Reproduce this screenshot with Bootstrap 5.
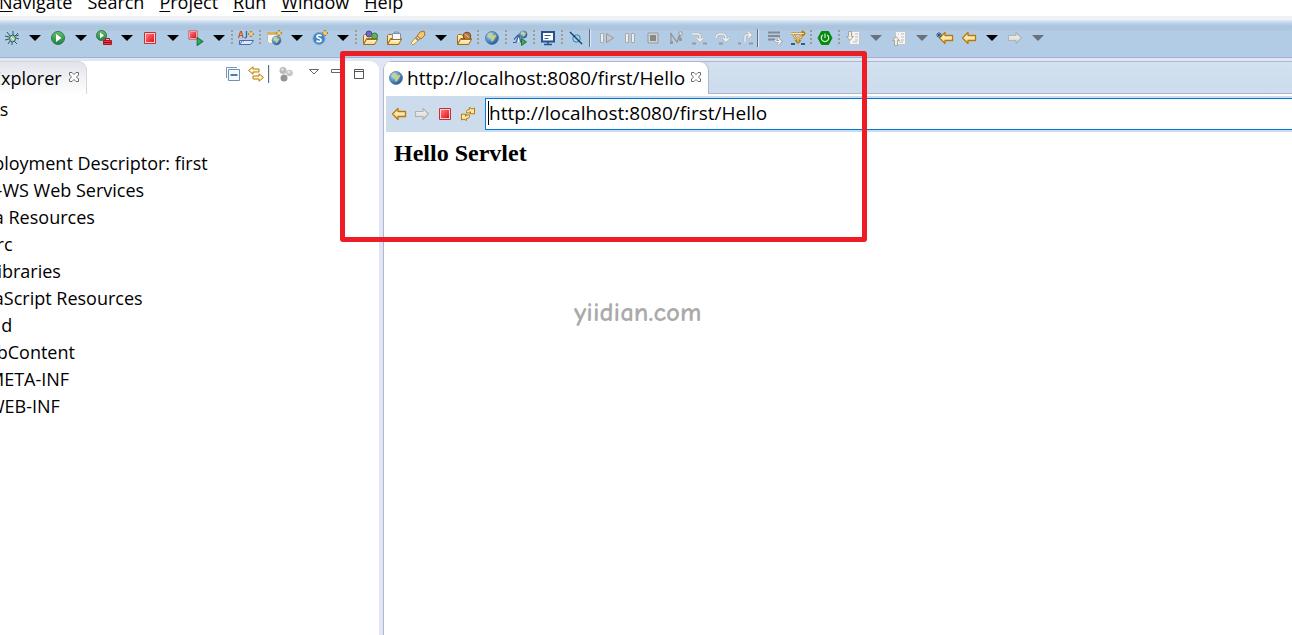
<!DOCTYPE html>
<html lang="en">
<head>
<meta charset="utf-8">
<meta name="viewport" content="width=device-width, initial-scale=1">
<title>Workbench</title>
<link rel="stylesheet" href="https://cdn.jsdelivr.net/npm/bootstrap@5.3.0/dist/css/bootstrap.min.css">
<style>
  body { font-family: "Open Sans", "Noto Sans", sans-serif; font-size: 18px; line-height: 24px; color: #000; background: #fff; }
  button { border: 0; background: none; padding: 0; color: inherit; }
  .menubar { height: 16px; padding-bottom: 2px; margin-left: -1px; gap: 15px; }
  .menubar a { color: #000; text-decoration: none; }
  .menubar u { text-underline-offset: 2px; }
  .toolstrip { height: 42px; padding-top: 3px; border-bottom: 1px solid #a3b0cb;
    background: linear-gradient(#f0f0f0 0 2px, #f1f7fc 3px, #d5e4f2 5px, #bfd5ea 7px, #abc5df 10px, #adc6e0 14px, #b2cce6 15px); }
  .tool { width: 24px; height: 24px; }
  .step { width: 23px; }
  .drop { width: 22px; height: 24px; }
  .drop::after { content: ""; border: 6px solid transparent; border-top-color: #000; border-bottom: 0; }
  .drop:disabled::after { border-top-color: #6d7076; }
  .dots { width: 4px; height: 16px; background: radial-gradient(circle at 2px 1px, #a89a86 1px, transparent 1px) 0 0 / 4px 4px; }
  .bar { width: 4px; height: 18px; margin-right: 3px; background: linear-gradient(90deg, transparent 1px, #5f6e80 1px 2px, #dfe9f3 2px 3px, transparent 3px); }
  .ico { width: 16px; height: 16px; fill: none; flex: none; overflow: visible; }
  .frame { background: #e1e6f5; padding-top: 3px; }
  .explorer { width: 379px; background: #fff; border-top-right-radius: 9px; overflow: hidden; margin-right: 4px; }
  .viewtab { height: 33px; padding-right: 4px; gap: 4px; border: 1px solid #d3d6de; border-width: 1px 1px 0 0;
    border-top-right-radius: 9px; background: linear-gradient(#e2e4ea, #fff); }
  .viewtab > span { margin-left: -9px; }
  .viewtools { padding-right: 9px; height: 26px; }
  .winbtn { width: 21px; }
  .tree { margin: 2px 0 0 -54px; line-height: 27px; white-space: nowrap; }
  .tree li { min-height: 27px; }
  .tree ul { padding-left: 24px; }
  .tree ul ul { padding-left: 18px; }
  .editor { min-width: 0; border-left: 1px solid #b0b6ce; border-top-left-radius: 9px; background: #fff; overflow: hidden; }
  .tabs { height: 33px; border-top: 1px solid #b0b6ce; background: #cfdeee; }
  .pagetab { padding: 0 4px 0 4px; gap: 3px; white-space: nowrap; font-size: 19px; background: #fff; border-right: 1px solid #b0b6ce; border-top-right-radius: 9px; }
  .tabspace { background: linear-gradient(#d3e1f0, #cbdcec); border-bottom: 1px solid #b0b6ce; }
  .browserbar { margin: 2px 0 0 2px; height: 36px; padding: 2px 0 2px 1px; background: #ccdcec; }
  .url { height: 32px; margin-left: 6px; padding: 0 0 3px 3px; border: 1px solid #0078d7; border-right: 0; background: #fff; min-width: 0; outline: 0; color: #000; font-size: 19px; }
  .caret { top: 3px; left: 9px; width: 1px; height: 24px; background: #000; }
  .page { padding: 7px 10px; font-family: "Liberation Serif", serif; }
  .page h1 { font-size: 24px; line-height: 28px; font-weight: 700; margin: 0; }
  .callout { left: 340px; top: 51px; width: 527px; height: 191px; border: 5px solid #ee1c25; border-radius: 3px; pointer-events: none; }
  .stamp { left: 574px; top: 298px; font: 700 27px/30px "Comic Sans MS", "Comic Neue", Lato, sans-serif; color: #aaa; }
</style>
</head>
<body class="position-relative min-vh-100 overflow-hidden d-flex flex-column">

<svg width="0" height="0" class="position-absolute" aria-hidden="true">
  <defs>
    <radialGradient id="gGlobe" cx=".35" cy=".3" r=".8"><stop offset="0" stop-color="#d8f0fb"/><stop offset=".45" stop-color="#5b9bcf"/><stop offset="1" stop-color="#1e4684"/></radialGradient>
    <linearGradient id="gRun" x2="0" y2="1"><stop offset="0" stop-color="#6cc067"/><stop offset="1" stop-color="#1f7f48"/></linearGradient>
    <linearGradient id="gRed" x2="1" y2="1"><stop offset="0" stop-color="#ff7b7b"/><stop offset="1" stop-color="#e00f1c"/></linearGradient>
    <linearGradient id="gGold" x2="0" y2="1"><stop offset="0" stop-color="#fffbe2"/><stop offset="1" stop-color="#fbd673"/></linearGradient>
    <linearGradient id="gGrey" x2="0" y2="1"><stop offset="0" stop-color="#fafafa"/><stop offset="1" stop-color="#cfcfcf"/></linearGradient>
    <symbol id="globe" viewBox="0 0 16 16"><circle cx="8" cy="8" r="6.500" fill="url(#gGlobe)" stroke="#5d7896" stroke-width=".8"/><path d="M4 5 6 3l2 .5L7.500 5 9 6l2-1.500 1.500 1L11 8l-2 3-1.500 1L7 9 5 7Z" fill="#c9d08a"/><path d="M10 3.500 12 4l.5 1.500-2-.5Z" fill="#6ea35a"/></symbol>
    <symbol id="stop" viewBox="0 0 16 16"><path d="M2.500 2.500h11v11h-11Z" fill="#ffd2d2" stroke="#c3303b"/><path d="M4 4h8v8H4Z" fill="url(#gRed)"/></symbol>
    <symbol id="left" viewBox="0 0 16 16"><path d="M1.500 8 7 2.500v3h7.500v5H7v3Z" fill="url(#gGold)" stroke="#b8780f" stroke-width="1.300" stroke-linejoin="round"/></symbol>
    <symbol id="right" viewBox="0 0 16 16"><path d="M14.500 8 9 2.500v3H1.500v5H9v3Z" fill="url(#gGrey)" stroke="#b2b2b2" stroke-width="1.100" stroke-linejoin="round"/></symbol>
    <symbol id="folder" viewBox="0 0 16 16"><path d="M1.500 13.500v-8l1-1h3l1 1H12v3" fill="#ffe9ad" stroke="#a56b17"/><path d="m1.500 14.500 3-6h11l-3 6Z" fill="url(#gGold)" stroke="#a56b17" stroke-linejoin="round"/></symbol>
    <symbol id="folderfront" viewBox="0 0 16 16"><path d="m1.500 14.500 3-5h11l-3 5Z" fill="url(#gGold)" stroke="#a56b17" stroke-linejoin="round"/></symbol>
    <symbol id="spark" viewBox="0 0 6 6"><path d="M3 0v6M0 3h6" stroke="#b17a12" stroke-width="2.200"/><path d="M3 .8v4.400M.8 3h4.400" stroke="#fff3b0" stroke-width="1"/></symbol>
    <symbol id="close" viewBox="0 0 12 12"><path d="M1.500 1.500H4L6 3.500l2-2h2.500V4l-2 2 2 2v2.500H8l-2-2-2 2H1.500V8l2-2-2-2Z" fill="#fff" stroke="#6c6c6c"/></symbol>
    <symbol id="play" viewBox="0 0 6 8"><path d="M.5.5 5.500 4l-5 3.500Z" fill="#3bab4f" stroke="#1c7a3f"/></symbol>
    <symbol id="sheet" viewBox="0 0 16 16"><path d="M4.500 1.500h10v13h-10Z" fill="#f4f4f2" stroke="#c3c5c8"/><path d="M10 4h3M10 7h3M10 10h3M8 12h4M7 4h1" stroke="#bbb"/></symbol>
  </defs>
</svg>

<nav class="menubar d-flex align-items-end flex-shrink-0" aria-label="Menu">
  <a href="#"><u>N</u>avigate</a><a href="#">Search</a><a href="#"><u>P</u>roject</a><a href="#"><u>R</u>un</a><a href="#"><u>W</u>indow</a><a href="#"><u>H</u>elp</a>
</nav>

<div class="toolstrip d-flex align-items-center flex-shrink-0" role="toolbar" aria-label="Main toolbar">
  <button class="tool d-flex align-items-center justify-content-center" aria-label="Debug"><svg class="ico"><g stroke="#2c5b66"><path d="m6 6-3-4M9 5V1m2 5 3-3M5 7 1 6m4 3-4 1m5 1-2 3m4-2v3m2-4 3 3m-1-6 3 1m-3-3 3-1"/><ellipse cx="8.500" cy="8.500" rx="3" ry="3.400" fill="#a8d29b"/></g><path d="m7 7 3 3" stroke="#eefbe0"/></svg></button>
  <button class="drop d-flex align-items-center justify-content-center" aria-label="Debug options"></button>
  <button class="tool d-flex align-items-center justify-content-center" aria-label="Run"><svg class="ico"><circle cx="8" cy="8" r="6.500" fill="url(#gRun)" stroke="#2b7c49"/><path d="M6 4v8l5.500-4Z" fill="#fff"/></svg></button>
  <button class="drop d-flex align-items-center justify-content-center" aria-label="Run options"></button>
  <button class="tool d-flex align-items-center justify-content-center" aria-label="External tools"><svg class="ico"><circle cx="5.500" cy="5.500" r="5" fill="url(#gRun)" stroke="#2b7c49"/><path d="M4 2.500v6l4-3Z" fill="#fff"/><path d="M9.500 10V8.500h4V10" stroke="#b3121c"/><path d="M7.500 10.500h8v4h-8Z" fill="#f0323b" stroke="#b3121c"/><path d="M8 12.500h7" stroke="#8b0c14"/></svg></button>
  <button class="drop d-flex align-items-center justify-content-center" aria-label="External tool options"></button>
  <button class="tool d-flex align-items-center justify-content-center" aria-label="Stop"><svg class="ico"><use href="#stop"/></svg></button>
  <button class="drop d-flex align-items-center justify-content-center" aria-label="Stop options"></button>
  <button class="tool d-flex align-items-center justify-content-center" aria-label="Relaunch"><svg class="ico"><use href="#stop" x="-1" y="-1" width="12" height="12"/><use href="#play" x="8" y="7" width="8" height="9"/></svg></button>
  <button class="drop d-flex align-items-center justify-content-center" aria-label="Relaunch options"></button>
  <span class="dots"></span>
  <button class="tool d-flex align-items-center justify-content-center" aria-label="New aspect"><svg class="ico"><path d="M.5 8 2.500 1.500H3.500L5 8M1.500 5.500h3" stroke="#c9541c" stroke-width="1.200"/><path d="M8.500 1v5.500Q8.500 8 6.500 8" stroke="#2f62ad" stroke-width="1.300"/><use href="#spark" x="10" y="1" width="6" height="6"/><path d="M1.500 14.500v-4h3l1 1m-4 3 3-4h11l-3 4Z" fill="#dce8fa" stroke="#4b6bb0"/></svg></button>
  <span class="dots"></span>
  <button class="tool d-flex align-items-center justify-content-center" aria-label="New web project"><svg class="ico"><path d="M1.500 4.500h10v9h-8l-2-2Z" fill="#f8f6ea" stroke="#b6bdb5"/><path d="M1 3h9" stroke="#e0b04c" stroke-width="2"/><use href="#globe" x="5" y="5" width="11" height="11"/><use href="#spark" x="10" y="0" width="6" height="6"/></svg></button>
  <button class="drop d-flex align-items-center justify-content-center" aria-label="Web project options"></button>
  <button class="tool d-flex align-items-center justify-content-center" aria-label="New servlet"><svg class="ico"><circle cx="7" cy="8.500" r="6" fill="#4384c3" stroke="#77a5d0"/><path d="M9.500 6C8 4.500 4.800 5 5 6.800 5.200 8.500 9.200 8.100 9.200 10.100 9.200 12.100 6 12.100 4.500 10.700" stroke="#fff" stroke-width="1.700"/><use href="#spark" x="10" y="0" width="6" height="6"/></svg></button>
  <button class="drop d-flex align-items-center justify-content-center" aria-label="Servlet options"></button>
  <span class="dots"></span>
  <button class="tool d-flex align-items-center justify-content-center" aria-label="Open type"><svg class="ico"><use href="#folder"/><circle cx="7" cy="4" r="3" fill="#7468b9" stroke="#4c3f97"/><circle cx="12.500" cy="6" r="3" fill="#62b25e" stroke="#2d7c43"/><use href="#folderfront"/></svg></button>
  <button class="tool d-flex align-items-center justify-content-center" aria-label="Open task"><svg class="ico"><use href="#folder"/><path d="M6.500 3.500h8v7h-8Z" fill="#f5f9ff" stroke="#8290a5"/><path d="M8.500 3V2h4v1" stroke="#8290a5"/><use href="#folderfront"/></svg></button>
  <button class="tool d-flex align-items-center justify-content-center" aria-label="Search"><svg class="ico"><path d="m1 13 6-7 3 3-7 6Z" fill="#fff4be" stroke="#c9932c"/><path d="m7 6 3-4 4-1 1 4-4 4Z" fill="#f7c777" stroke="#b56d1d"/><path d="m5.500 7.500 3 3" stroke="#7f8fae" stroke-width="2"/></svg></button>
  <button class="drop d-flex align-items-center justify-content-center" aria-label="Search options"></button>
  <button class="tool d-flex align-items-center justify-content-center" aria-label="Open resource"><svg class="ico"><use href="#folder"/><circle cx="11" cy="6" r="3.800" fill="#b87c46" stroke="#77451c"/><path d="m8.500 4 5 4" stroke="#e8bd88"/><use href="#folderfront"/></svg></button>
  <span class="dots"></span>
  <button class="tool d-flex align-items-center justify-content-center" aria-label="Web browser"><svg class="ico"><use href="#globe"/></svg></button>
  <span class="dots"></span>
  <button class="tool d-flex align-items-center justify-content-center" aria-label="Web services"><svg class="ico"><use href="#globe" x="7" y="0" width="9" height="9"/><path d="M1 12.500h3l3-8 2 8M2 9.500 6 5" stroke="#3e639f" stroke-width="1.200"/><path d="M6.500 8v4" stroke="#fff"/><use href="#play" x="8" y="8" width="8" height="8"/></svg></button>
  <span class="dots"></span>
  <button class="tool d-flex align-items-center justify-content-center" aria-label="Console"><svg class="ico"><path d="M2 2h12v9.500H2Z" fill="#fff" stroke="#294f8c" stroke-width="2"/><path d="M4.500 5.500h6m-6 3h4" stroke="#3d5f95"/><path d="M8 12v2M4 14.500h8" stroke="#294f8c" stroke-width="1.500"/></svg></button>
  <span class="dots"></span>
  <button class="tool d-flex align-items-center justify-content-center" aria-label="Skip breakpoints"><svg class="ico"><circle cx="8.500" cy="8.500" r="3.700" fill="#a5d3e3" stroke="#3d7f9c"/><path d="m2 2 12 12" stroke="#1d3f75" stroke-width="1.400"/></svg></button>
  <span class="bar"></span>
  <button class="tool step d-flex align-items-center justify-content-center" disabled aria-label="Resume"><svg class="ico"><path d="M1.500 3.500h3v9h-3Z" fill="#eee" stroke="#aaa"/><path d="M7.500 3.500v9L14.500 8Z" fill="#c6c6c6" stroke="#999"/></svg></button>
  <button class="tool step d-flex align-items-center justify-content-center" disabled aria-label="Suspend"><svg class="ico"><path d="M3.500 3.500h3v9h-3Zm6 0h3v9h-3Z" fill="#eee" stroke="#a8a8a8"/></svg></button>
  <button class="tool step d-flex align-items-center justify-content-center" disabled aria-label="Terminate"><svg class="ico"><path d="M3 3h10v10H3Z" fill="#d2d2d2" stroke="#999"/><path d="M5 5h6v6H5Z" fill="#888"/></svg></button>
  <button class="tool step d-flex align-items-center justify-content-center" disabled aria-label="Disconnect"><svg class="ico"><path d="M3 12V4l6 8 3-8M12 5v5" stroke="#929292" stroke-width="1.200"/><path d="M2 11h3v3H2Zm0-8h2v2H2Zm9 5h3v3h-3Z" fill="#999"/><circle cx="12.500" cy="3.500" r="1.800" fill="#ddd" stroke="#999"/></svg></button>
  <button class="tool step d-flex align-items-center justify-content-center" disabled aria-label="Step into"><svg class="ico"><path d="M1 4h6q2 0 2 2v5M6 8l3 3 3-3" stroke="#aaa" stroke-width="2.600"/><path d="M1 4h6q2 0 2 2v5M6 8l3 3 3-3" stroke="#f1f1f1" stroke-width="1.500"/><path d="M1 13.500h4m7 0h4" stroke="#999" stroke-width="2"/></svg></button>
  <button class="tool step d-flex align-items-center justify-content-center" disabled aria-label="Step over"><svg class="ico"><path d="M2 8q0-4 5-4t5 4v2M9 8l3 3 3-3" stroke="#aaa" stroke-width="2.600"/><path d="M2 8q0-4 5-4t5 4v2M9 8l3 3 3-3" stroke="#f1f1f1" stroke-width="1.500"/><path d="M5 13.500h4" stroke="#999" stroke-width="2"/></svg></button>
  <button class="tool step d-flex align-items-center justify-content-center" disabled aria-label="Step return"><svg class="ico"><path d="M8 12V7q0-2 2-2h4M11 2l3 3-3 3" stroke="#aaa" stroke-width="2.600"/><path d="M8 12V7q0-2 2-2h4M11 2l3 3-3 3" stroke="#f1f1f1" stroke-width="1.500"/><path d="M1 13.500h3m8 0h4" stroke="#999" stroke-width="2"/></svg></button>
  <span class="bar"></span>
  <button class="tool step d-flex align-items-center justify-content-center" aria-label="Drop to frame"><svg class="ico"><path d="M1 2.500h12M1 6h12M1 9.500h7" stroke="#858b92" stroke-width="1.800"/><path d="M8 10q0 2 5 1.500M11 8.500l3 3-3 3" stroke="#999" stroke-width="2.600"/><path d="M8 10q0 2 5 1.500M11 8.500l3 3-3 3" stroke="#f5f5f5" stroke-width="1.300"/></svg></button>
  <button class="tool step d-flex align-items-center justify-content-center" aria-label="Step filters"><svg class="ico"><g stroke-linejoin="round"><path d="M1 3.500h13M12 1l2.500 2.500L12 6M3 4l2.500 4H11V4M8 8v4M5.500 10 8 12.500l2.500-2.500" stroke="#b9770e" stroke-width="2.200"/><path d="M1 3.500h13M3 4l2.500 4H11V4M8 8v4" stroke="#ffe5a0" stroke-width="1"/></g><path d="M1 14h4m6 0h4" stroke="#315a90" stroke-width="2"/></svg></button>
  <span class="dots"></span>
  <button class="tool d-flex align-items-center justify-content-center" aria-label="Boot dashboard"><svg class="ico"><path d="m4.500 1.500h7L15 8l-3.500 6.500h-7L1 8Z" fill="#078a10" stroke="#078a10" stroke-linejoin="round"/><path d="M5.700 5a3.700 3.700 0 1 0 4.600 0M8 3.500V8" stroke="#d8f5d2" stroke-width="1.200"/></svg></button>
  <span class="dots"></span>
  <button class="tool d-flex align-items-center justify-content-center" disabled aria-label="Next annotation"><svg class="ico"><use href="#sheet"/><path d="M3.500 1.500h3v5h2l-3.500 4-3.500-4h2Z" fill="#efede8" stroke="#a9a6a0"/></svg></button>
  <button class="drop d-flex align-items-center justify-content-center" disabled aria-label="Next annotation options"></button>
  <button class="tool d-flex align-items-center justify-content-center" disabled aria-label="Previous annotation"><svg class="ico"><use href="#sheet"/><path d="M3.500 15.500h3v-5h2l-3.500-4-3.500 4h2Z" fill="#efede8" stroke="#a9a6a0"/></svg></button>
  <button class="drop d-flex align-items-center justify-content-center" disabled aria-label="Previous annotation options"></button>
  <button class="tool d-flex align-items-center justify-content-center" aria-label="Last edit location"><svg class="ico"><use href="#left" x="1"/><path d="M2 2v6M-1 5h6M0 3l4 4m0-4L0 7" stroke="#24507e" stroke-width=".9"/></svg></button>
  <button class="tool d-flex align-items-center justify-content-center" aria-label="Back"><svg class="ico"><use href="#left"/></svg></button>
  <button class="drop d-flex align-items-center justify-content-center" aria-label="Back history"></button>
  <button class="tool d-flex align-items-center justify-content-center" disabled aria-label="Forward"><svg class="ico"><use href="#right"/></svg></button>
  <button class="drop d-flex align-items-center justify-content-center" disabled aria-label="Forward history"></button>
</div>

<main class="frame d-flex flex-grow-1">
  <aside class="explorer flex-shrink-0">
    <div class="d-flex justify-content-between align-items-start">
      <div class="viewtab d-flex align-items-center"><span>Explorer</span>
        <button class="d-flex" aria-label="Close Explorer"><svg class="ico" viewBox="-2 -1 16 16"><use href="#close" width="12" height="12"/></svg></button></div>
      <div class="viewtools d-flex align-items-center">
        <button class="tool step d-flex align-items-center justify-content-center" aria-label="Collapse all"><svg class="ico"><path d="M1.500 12V1.500H12" fill="#fff" stroke="#6f98bd"/><path d="M3.500 3.500h11v11h-11Z" fill="#f3faff" stroke="#6f8fae"/><path d="M5.500 9h7" stroke="#1c4f86" stroke-width="1.500"/></svg></button>
        <button class="tool step d-flex align-items-center justify-content-center" aria-label="Link with editor"><svg class="ico"><path d="M.5 4.500 5 .8V3h6v3H5v2.200ZM15.500 11.500 11 7.800V10H5v3h6v2.200Z" fill="#fff4c2" stroke="#b8780f"/></svg></button>
        <span class="bar"></span>
        <button class="tool d-flex align-items-center justify-content-center" aria-label="Focus task" disabled><svg class="ico"><circle cx="5" cy="4.500" r="3.500" fill="#b9b9b9"/><circle cx="11.500" cy="7" r="3.300" fill="#c6c6c6"/><circle cx="6" cy="12" r="3.500" fill="#959595"/><circle cx="4.500" cy="3.500" r="1.300" fill="#e6e6e6"/><circle cx="11" cy="6" r="1.300" fill="#e6e6e6"/></svg></button>
        <button class="tool ms-1 d-flex align-items-center justify-content-center" aria-label="View menu"><svg class="ico"><path d="M3.500 3.500h9L8 8Z" fill="#fff" stroke="#666"/></svg></button>
        <button class="winbtn d-flex justify-content-center" aria-label="Minimize"><svg class="ico"><path d="M2.500 3.500h9v3h-9Z" fill="#fff" stroke="#666"/></svg></button>
        <button class="step d-flex justify-content-center" aria-label="Maximize"><svg class="ico"><path d="M3.500 3.500h9v9h-9Zm0 2h9" fill="#fff" stroke="#555"/></svg></button>
      </div>
    </div>
    <ul class="tree list-unstyled">
      <li>Servers</li>
      <li><div>&nbsp;</div>
        <ul class="list-unstyled">
          <li>Deployment Descriptor: first</li>
          <li>JAX-WS Web Services</li>
          <li>Java Resources
            <ul class="list-unstyled"><li>src</li><li>Libraries</li></ul></li>
          <li>JavaScript Resources</li>
          <li>build</li>
          <li>WebContent
            <ul class="list-unstyled"><li>META-INF</li><li>WEB-INF</li></ul></li>
        </ul></li>
    </ul>
  </aside>

  <section class="editor flex-grow-1">
    <div class="tabs d-flex">
      <div class="pagetab d-flex align-items-center"><svg class="ico"><use href="#globe"/></svg><span>http://localhost:8080/first/Hello</span>
        <button class="d-flex" aria-label="Close page"><svg class="ico" viewBox="-2 -1 16 16"><use href="#close" width="12" height="12"/></svg></button></div>
      <div class="tabspace flex-grow-1"></div>
    </div>
    <div class="browserbar d-flex align-items-center">
      <button class="tool step d-flex align-items-center justify-content-center" aria-label="Back"><svg class="ico"><use href="#left"/></svg></button>
      <button class="tool step d-flex align-items-center justify-content-center" disabled aria-label="Forward"><svg class="ico"><use href="#right"/></svg></button>
      <button class="tool step d-flex align-items-center justify-content-center" aria-label="Stop loading"><svg class="ico"><use href="#stop"/></svg></button>
      <button class="tool step d-flex align-items-center justify-content-center" aria-label="Refresh"><svg class="ico"><path d="M6.500 7V5.500q0-2 3-2v-2L12 3l2.500-1v6l-5-.5 1.500-1.500Q9 5.500 8.500 7Z" fill="#ffe9a3" stroke="#b8780f"/><path d="M9.500 9v1.500q0 2-3 2v2L4 13l-2.500 1V8l5 .5L5 10q2 .5 2.500-1Z" fill="#ffe9a3" stroke="#b8780f"/></svg></button>
      <div class="position-relative d-flex flex-grow-1">
        <input class="url flex-grow-1" type="text" aria-label="Address" value="http://localhost:8080/first/Hello">
        <span class="caret position-absolute"></span>
      </div>
    </div>
    <article class="page"><h1>Hello Servlet</h1></article>
  </section>
</main>

<div class="callout position-absolute"></div>
<div class="stamp position-absolute">yiidian.com</div>
<script src="https://cdn.jsdelivr.net/npm/bootstrap@5.3.0/dist/js/bootstrap.bundle.min.js"></script>
</body>
</html>
